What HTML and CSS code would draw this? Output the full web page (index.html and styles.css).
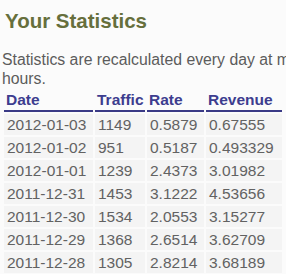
FILE: index.html
```html
<!DOCTYPE html>
<html>
<head>
<meta charset="utf-8">
<link rel="stylesheet" href="styles.css">
</head>
<body>
<div class="page">
  <h2 class="title">Your Statistics</h2>
  <p class="intro">Statistics are recalculated every day at midnight, every 24<br>hours.</p>
  <table class="stats">
    <colgroup>
      <col class="c-date"><col class="c-traffic"><col class="c-rate"><col class="c-rev">
    </colgroup>
    <thead>
      <tr><th>Date</th><th>Traffic</th><th>Rate</th><th>Revenue</th></tr>
    </thead>
    <tbody>
      <tr><td>2012-01-03</td><td>1149</td><td>0.5879</td><td>0.67555</td></tr>
      <tr><td>2012-01-02</td><td>951</td><td>0.5187</td><td>0.493329</td></tr>
      <tr><td>2012-01-01</td><td>1239</td><td>2.4373</td><td>3.01982</td></tr>
      <tr><td>2011-12-31</td><td>1453</td><td>3.1222</td><td>4.53656</td></tr>
      <tr><td>2011-12-30</td><td>1534</td><td>2.0553</td><td>3.15277</td></tr>
      <tr><td>2011-12-29</td><td>1368</td><td>2.6514</td><td>3.62709</td></tr>
      <tr><td>2011-12-28</td><td>1305</td><td>2.8214</td><td>3.68189</td></tr>
    </tbody>
  </table>
</div>
</body>
</html>
```

FILE: styles.css
```css
html, body {
  margin: 0;
  padding: 0;
  background: #fbfbfb;
  overflow: hidden;
}
.page {
  padding: 0 0 0 2px;
  width: 420px;
  font-family: "Liberation Sans", Arial, sans-serif;
}
.title {
  margin: 9px 0 0 3px;
  font-size: 20.5px;
  line-height: 24px;
  font-weight: bold;
  color: #666f3c;
}
.intro {
  margin: 17px 0 0 0;
  font-size: 15.8px;
  line-height: 19px;
  color: #5c5c5c;
  white-space: nowrap;
}
.stats {
  border-collapse: separate;
  border-spacing: 2px;
  margin: 0;
  table-layout: fixed;
  width: 280px;
  font-size: 15.5px;
  line-height: 18px;
}
.c-date { width: 89px; }
.c-traffic { width: 50px; }
.c-rate { width: 57px; }
.c-rev { width: 76px; }
.stats th {
  text-align: left;
  font-weight: bold;
  color: #3d3d8f;
  padding: 1px 0 1px 2px;
  border-bottom: 2px solid #3a3a86;
  white-space: nowrap;
}
.stats td {
  background: #f4f4f4;
  color: #626262;
  padding: 2px 0 1px 3px;
  white-space: nowrap;
}
```
